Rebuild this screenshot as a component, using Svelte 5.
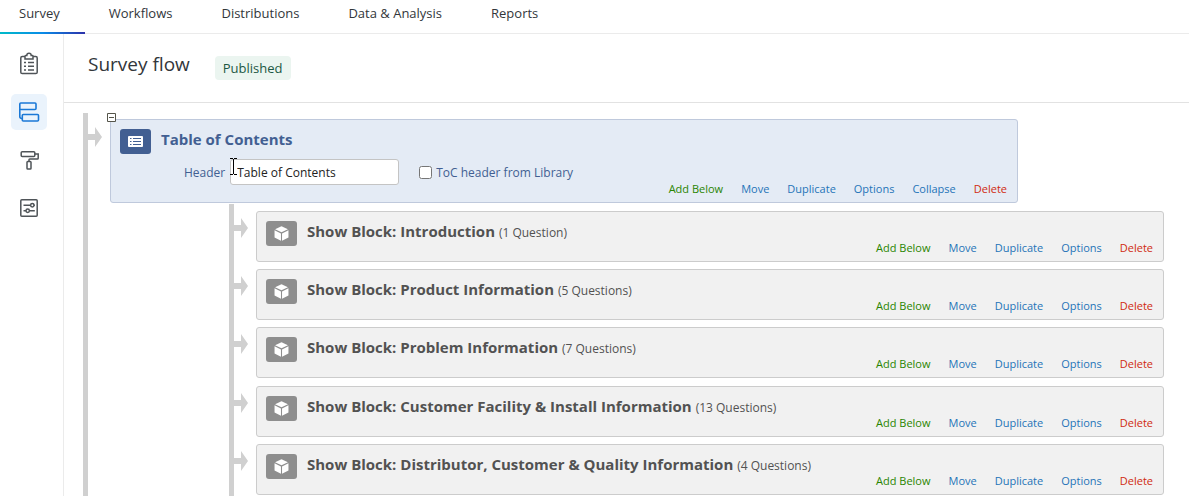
<script>
  const tabs = ['Survey', 'Workflows', 'Distributions', 'Data & Analysis', 'Reports'];
  const blocks = [
    { name: 'Introduction', count: '1 Question' },
    { name: 'Product Information', count: '5 Questions' },
    { name: 'Problem Information', count: '7 Questions' },
    { name: 'Customer Facility & Install Information', count: '13 Questions' },
    { name: 'Distributor, Customer & Quality Information', count: '4 Questions' }
  ];
  const blockActions = ['Add Below', 'Move', 'Duplicate', 'Options', 'Delete'];
  const tocActions = ['Add Below', 'Move', 'Duplicate', 'Options', 'Collapse', 'Delete'];
  let header = $state('Table of Contents');
  let fromLibrary = $state(false);
</script>

{#snippet actions(list)}
  <div class="actions">
    {#each list as action}
      <a href="#flow" class:add={action === 'Add Below'} class:delete={action === 'Delete'}>{action}</a>
    {/each}
  </div>
{/snippet}

{#snippet arrow()}
  <svg class="arrow" width="14" height="20" viewBox="0 0 14 20" aria-hidden="true">
    <path d="M0 7h7V0l7 10-7 10v-7H0z" fill="#d0d0d0" />
  </svg>
{/snippet}

<div class="page">
  <nav class="tabs">
    {#each tabs as tab, i}
      <a href="#flow" class:active={i === 0}>{tab}</a>
    {/each}
  </nav>
  <div class="body">
    <aside>
      <button aria-label="Builder">
        <svg width="20" height="24" viewBox="0 0 20 24" fill="none" stroke="#4f5458" stroke-width="1.5">
          <path d="M6 4.5H3.2Q1.8 4.5 1.8 6v14.2q0 1.4 1.4 1.4h13.6q1.4 0 1.4-1.4V6q0-1.5-1.4-1.5H14M6 7V4.2q0-.7.7-.7h1.1a2.2 2.2 0 0 1 4.4 0h1.1q.7 0 .7.7V7z" />
          <path d="M5 10.5h2M9 10.5h6M5 14.3h2M9 14.3h6M5 18h2M9 18h6" />
        </svg>
      </button>
      <button class="current" aria-label="Survey flow">
        <svg width="22" height="22" viewBox="0 0 22 22" fill="none" stroke="#1a78d6" stroke-width="1.6">
          <rect x="1.8" y="2" width="16.2" height="6.5" rx="1" />
          <path d="M1.8 8v7.5q0 2 2.2 2" />
          <rect x="4.3" y="13.5" width="16.2" height="6.5" rx="1" />
        </svg>
      </button>
      <button aria-label="Look and feel">
        <svg width="22" height="22" viewBox="0 0 22 22" fill="none" stroke="#4f5458" stroke-width="1.5">
          <rect x="3.2" y="2.8" width="13.6" height="4.6" rx="1" />
          <path d="M17 5h3.2v4.2q0 .8-.8.8h-7.6q-.8 0-.8.8V12" />
          <rect x="9" y="12.5" width="4" height="7.5" rx=".8" />
        </svg>
      </button>
      <button aria-label="Survey options">
        <svg width="20" height="20" viewBox="0 0 20 20" fill="none" stroke="#4f5458" stroke-width="1.5">
          <rect x="1.8" y="1.8" width="16.4" height="16.4" rx="1" />
          <path d="M4.5 7.3h7M15 7.3h.8M4.5 12.8H7M10.5 12.8h5.3" />
          <circle cx="13.3" cy="7.3" r="1.7" />
          <circle cx="8.7" cy="12.8" r="1.7" />
        </svg>
      </button>
    </aside>
    <main>
      <header>
        <h1>Survey flow</h1>
        <span class="badge">Published</span>
      </header>
      <section class="flow" id="flow">
        {@render arrow()}
        <div class="tree">
          <article class="card toc">
            <button class="toggle" aria-label="Collapse table of contents">
              <svg width="9" height="9" viewBox="0 0 9 9"><path d="M.5.5h8v8h-8zM2 4.5h5" fill="#fff" stroke="#55554a" /></svg>
            </button>
            <span class="icon">
              <svg width="15" height="11" viewBox="0 0 15 11">
                <rect width="15" height="11" rx="1" fill="#fff" />
                <path d="M2 2.5h1.5M5 2.5h8M2 5.5h1.5M5 5.5h8M2 8.5h1.5M5 8.5h8" stroke="#425f92" />
              </svg>
            </span>
            <div class="content">
              <h2>Table of Contents</h2>
              <div class="fields">
                <label for="toc-header">Header</label>
                <input id="toc-header" type="text" bind:value={header} />
                <input id="toc-library" type="checkbox" bind:checked={fromLibrary} />
                <label for="toc-library">ToC header from Library</label>
                <svg class="cursor" width="7" height="17" viewBox="0 0 7 17" aria-hidden="true">
                  <path d="M0 .5h3M4 .5h3M3.5 1v15M0 16.5h3M4 16.5h3" stroke="#000" />
                </svg>
              </div>
            </div>
            {@render actions(tocActions)}
          </article>
          <ul>
            {#each blocks as block}
              <li>
                {@render arrow()}
                <article class="card">
                  <span class="icon">
                    <svg width="15" height="15" viewBox="0 0 14 14" fill="#fff">
                      <path d="M7 .3 13 3 7 5.9 1 3zM.5 4l6 2.9v6.8l-6-3zM13.5 4l-6 2.9v6.8l6-3z" />
                    </svg>
                  </span>
                  <div class="content">
                    <h2>Show Block: {block.name} <small>({block.count})</small></h2>
                  </div>
                  {@render actions(blockActions)}
                </article>
              </li>
            {/each}
          </ul>
        </div>
      </section>
    </main>
  </div>
</div>

<style>
  :global(body) {
    background: #fff;
    overflow: hidden;
  }
  * {
    box-sizing: border-box;
  }
  .page {
    font-family: 'Open Sans', 'Noto Sans', sans-serif;
    font-size: 13px;
    color: #32363a;
  }
  a {
    text-decoration: none;
  }
  .tabs {
    display: flex;
    height: 34px;
    border-bottom: 1px solid #ebebeb;
  }
  .tabs a {
    height: 34px;
    padding: 3px 25px 0 24px;
    line-height: 20px;
    color: #32363a;
  }
  .tabs .active {
    padding-left: 19px;
    border-bottom: 2px solid;
    border-image: linear-gradient(90deg, #00bcc8, #0a8ce8 50%, #2d2fa8) 1;
  }
  .body {
    display: flex;
  }
  aside {
    flex: none;
    display: flex;
    flex-direction: column;
    align-items: center;
    gap: 12px;
    width: 64px;
    padding: 12px 6px 0 0;
    border-right: 1px solid #ebebeb;
  }
  button {
    display: grid;
    place-items: center;
    padding: 0;
    border: 0;
    background: none;
  }
  aside button {
    width: 36px;
    height: 36px;
    border-radius: 5px;
  }
  .current {
    background: #eaf3fc;
  }
  main {
    flex: 1;
    min-width: 0;
  }
  header {
    display: flex;
    gap: 25px;
    height: 69px;
    padding: 16px 24px 0;
    border-bottom: 1px solid #e2e2e2;
  }
  h1 {
    margin: 0;
    font-size: 19px;
    line-height: 28px;
    font-weight: 400;
  }
  .badge {
    height: 24px;
    margin-top: 6px;
    padding: 0 8px;
    border-radius: 4px;
    line-height: 24px;
    background: #ebf5f0;
    color: #1c5843;
  }
  .flow {
    display: flex;
    margin: 10px 25px 0 19px;
    border-left: 5px solid #d0d0d0;
  }
  .arrow {
    flex: none;
    display: block;
    margin-top: 14px;
  }
  .tree {
    flex: 1;
    min-width: 0;
    padding: 6px 0 0 8px;
  }
  .card {
    position: relative;
    display: flex;
    gap: 10px;
    min-height: 51px;
    padding: 9px;
    border: 1px solid #ccc;
    border-radius: 3px;
    background: #f1f1f1;
    color: #525252;
  }
  .toc {
    min-height: 84px;
    width: calc(100% - 146px);
    border-color: #bfc9dc;
    background: #e4ebf5;
    color: #425f92;
  }
  .toggle {
    position: absolute;
    top: -7px;
    left: -4px;
  }
  .icon {
    flex: none;
    display: grid;
    place-items: center;
    width: 31px;
    height: 25px;
    border-radius: 3px;
    background: #8e8e8e;
  }
  .toc .icon {
    background: #425f92;
  }
  .content {
    flex: 1;
    min-width: 0;
  }
  h2 {
    margin: 0;
    font-size: 15px;
    line-height: 20px;
    font-weight: 700;
    white-space: nowrap;
  }
  small {
    font-size: 12px;
    font-weight: 400;
  }
  .fields {
    position: relative;
    display: flex;
    align-items: center;
    margin: 10px 0 0 23px;
    font-size: 12px;
  }
  .fields input[type='text'] {
    width: 169px;
    height: 26px;
    margin: 0 20px 0 5px;
    padding: 0 6px;
    border: 1px solid #c4c4c4;
    border-radius: 3px;
    background: #fff;
    color: #222;
    font: inherit;
  }
  .fields input[type='checkbox'] {
    width: 13px;
    height: 13px;
    margin: 0 4px 0 0;
  }
  .cursor {
    position: absolute;
    top: -1px;
    left: 46px;
  }
  .actions {
    position: absolute;
    right: 10px;
    bottom: 5px;
    display: flex;
    gap: 18px;
    font-size: 11px;
    line-height: 16px;
  }
  .actions a {
    color: #1f74b8;
  }
  .actions .add {
    color: #2a8500;
  }
  .actions .delete {
    color: #d02a10;
  }
  ul {
    display: flex;
    flex-direction: column;
    gap: 7px;
    margin: 1px 0 0 119px;
    padding: 7px 0;
    border-left: 5px solid #d0d0d0;
    list-style: none;
  }
  li {
    display: flex;
    gap: 8px;
  }
  li:nth-child(odd) {
    padding-bottom: 1px;
  }
  li:first-child {
    padding-bottom: 0;
  }
  li .arrow {
    margin-top: 7px;
  }
  li .card {
    flex: 1;
    min-width: 0;
  }
</style>
